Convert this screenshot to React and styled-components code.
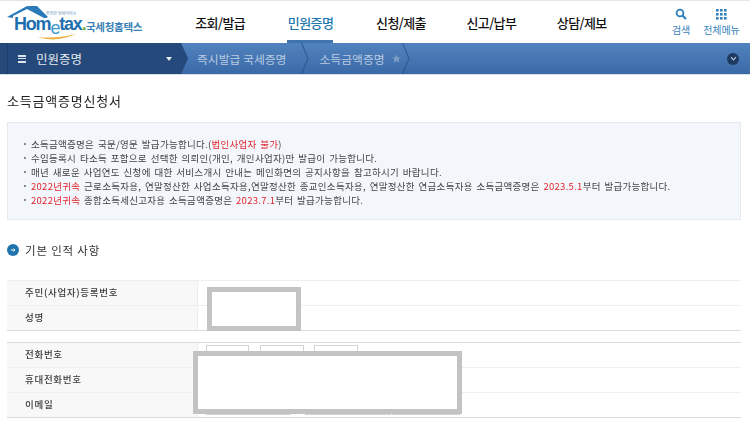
import React from "react";
import styled, { createGlobalStyle, css } from "styled-components";

const Global = createGlobalStyle`
  html, body {
    margin: 0;
    padding: 0;
    background: #fff;
    font-family: "Noto Sans CJK KR", "Noto Sans", sans-serif;
  }
`;

// the reference is a scaled down capture, so its small text is a little soft
const soft = css`
  filter: blur(0.3px);
`;

const Page = styled.div`
  position: relative;
  width: 750px;
  height: 422px;
  overflow: hidden;
  background: #fff;
`;

const Header = styled.header`
  display: flex;
  align-items: flex-start;
  height: 42px;
  border-top: 1px solid #e6e6e6;
`;

const LogoWrap = styled.div`
  position: relative;
  width: 175px;
  height: 42px;
  flex: none;
`;

const LogoArt = styled.svg`
  position: absolute;
  left: 0;
  top: 0;
`;

const LogoWord = styled.span`
  position: absolute;
  left: 14px;
  top: 16px;
  font-family: "Liberation Sans", sans-serif;
  font-size: 18px;
  line-height: 15px;
  font-weight: 700;
  letter-spacing: -1.2px;
  color: #1e6fb0;
`;

const LogoE = styled.span`
  position: relative;
  top: 4px;
  color: #3d9bd0;
  font-weight: 400;
`;

const LogoDot = styled.span`
  color: #7ab52e;
`;

const LogoKor = styled.span`
  position: absolute;
  left: 86px;
  top: 18px;
  font-size: 10.5px;
  line-height: 15px;
  font-weight: 700;
  letter-spacing: -0.3px;
  color: #3a7fb5;
`;

const LogoTiny = styled.span`
  position: absolute;
  left: 46px;
  top: 10px;
  font-size: 4px;
  line-height: 5px;
  color: #5b8fbb;
  white-space: nowrap;
`;

const Nav = styled.nav`
  display: flex;
  width: 452px;
`;

const NavItem = styled.a`
  position: relative;
  width: 90.4px;
  height: 42px;
  padding-top: 11px;
  box-sizing: border-box;
  text-align: center;
  font-size: 13px;
  line-height: 22px;
  font-weight: 500;
  letter-spacing: -0.6px;
  color: ${(p) => (p.$active ? "#2277ae" : "#111")};
  &::after {
    content: "";
    display: ${(p) => (p.$active ? "block" : "none")};
    position: absolute;
    left: 22px;
    right: 23px;
    bottom: 0;
    height: 3px;
    background: #3f74ad;
  }
`;

const Tools = styled.div`
  display: flex;
  margin-left: 45px;
  gap: 13px;
`;

const ToolBtn = styled.a`
  display: flex;
  flex-direction: column;
  align-items: center;
  padding-top: 7px;
  font-size: 10px;
  line-height: 13px;
  letter-spacing: -0.1px;
  color: #3b85bb;
  svg {
    display: block;
    margin-bottom: 3px;
  }
`;

const Bar = styled.div`
  display: flex;
  align-items: center;
  height: 31px;
  background: linear-gradient(#5183be, #3a69a7);
  border-bottom: 1px solid #d9dfe7;
`;

const BarMain = styled.div`
  position: relative;
  display: flex;
  align-items: center;
  flex: none;
  width: 181px;
  height: 100%;
  padding-left: 18px;
  box-sizing: border-box;
  background: #24497a;
  color: #e4e9f0;
  font-size: 12.5px;
  &::before {
    content: "";
    position: absolute;
    left: 7px;
    top: 0;
    bottom: 0;
    width: 1px;
    background: #1c3d69;
  }
  &::after {
    content: "";
    position: absolute;
    left: 100%;
    top: 0;
    bottom: 0;
    width: 7px;
    background: #24497a;
    clip-path: polygon(0 0, 100% 50%, 0 100%);
  }
`;

const Burger = styled.span`
  width: 8px;
  height: 8px;
  margin-right: 10px;
  border-top: 2px solid #dfe6ef;
  border-bottom: 2px solid #dfe6ef;
  background: linear-gradient(#dfe6ef, #dfe6ef) center / 100% 1.4px no-repeat;
  box-sizing: border-box;
`;

const Caret = styled.span`
  margin-left: auto;
  margin-right: 9px;
  width: 0;
  height: 0;
  border-left: 3.5px solid transparent;
  border-right: 3.5px solid transparent;
  border-top: 4px solid #e8edf3;
`;

const Crumb = styled.span`
  font-size: 11.8px;
  color: #b9cbe2;
  margin-left: ${(p) => p.$left};
  white-space: nowrap;
`;

const Sep = styled.svg`
  flex: none;
  margin-left: ${(p) => p.$left};
`;

const Star = styled.svg`
  flex: none;
  margin-left: 7px;
`;

const More = styled.span`
  display: flex;
  align-items: center;
  justify-content: center;
  width: 12px;
  height: 12px;
  margin-left: auto;
  margin-right: 11px;
  border-radius: 50%;
  background: #1f3a60;
`;

const Content = styled.main`
  padding: 0 9px 0 7px;
`;

const Title = styled.h1`
  margin: 16px 0 12px;
  font-size: 13px;
  line-height: 19px;
  font-weight: 400;
  letter-spacing: 0.8px;
  color: #222;
  ${soft}
`;

const Notice = styled.ul`
  height: 98px;
  margin: 0;
  padding: 14px 0 0 16px;
  box-sizing: border-box;
  list-style: none;
  background: #f3f6fb;
  border: 1px solid #e5e9f0;
`;

const NoticeLine = styled.li`
  position: relative;
  padding-left: 7px;
  font-size: 9.5px;
  line-height: 14px;
  letter-spacing: 0.28px;
  word-spacing: 1.4px;
  white-space: nowrap;
  color: #444;
  ${soft}
  &::before {
    content: "";
    position: absolute;
    left: 0;
    top: 6px;
    width: 2px;
    height: 2px;
    background: #8a8a8a;
  }
`;

const Red = styled.span`
  color: #e0262c;
`;

const SectionTitle = styled.h2`
  display: flex;
  align-items: center;
  gap: 6px;
  margin: 21px 0 21px;
  font-size: 11.5px;
  line-height: 18px;
  font-weight: 400;
  letter-spacing: 0.8px;
  color: #333;
  ${soft}
`;

const Table = styled.div`
  margin-bottom: ${(p) => p.$gap || "0"};
  border-top: 1px solid ${(p) => p.$top || "#eee"};
  border-bottom: 1px solid #dcdcdc;
`;

const Row = styled.div`
  display: flex;
  height: 24px;
  & + & {
    border-top: 1px solid #efefef;
  }
`;

const Head = styled.div`
  flex: none;
  width: 191px;
  padding-left: 18px;
  box-sizing: border-box;
  background: #f8f8f8;
  border-right: 1px solid #eee;
`;

const HeadText = styled.span`
  display: block;
  font-size: 9.5px;
  line-height: 23px;
  font-weight: 500;
  letter-spacing: 0.7px;
  color: #3a3a3a;
  ${soft}
`;

const Cell = styled.div`
  display: flex;
  flex: 1;
  gap: ${(p) => p.$gap || "10.5px"};
  padding-left: 8px;
`;

const Field = styled.div`
  width: ${(p) => p.$w}px;
  height: 20px;
  margin-top: 2px;
  margin-left: ${(p) => p.$ml || "0"};
  box-sizing: border-box;
  border: 1px solid #d4d4d4;
  background: #fff;
`;

const Redact = styled.div`
  position: absolute;
  left: ${(p) => p.$x}px;
  top: ${(p) => p.$y}px;
  width: ${(p) => p.$w}px;
  height: ${(p) => p.$h}px;
  box-sizing: border-box;
  border: 5px solid #c3c3c3;
  background: #fff;
`;

export default function App() {
  return (
    <Page>
      <Global />
      <Header>
        <LogoWrap>
          <LogoArt width="76" height="42" viewBox="0 0 76 42">
            <path d="M7 16 L27 5 L48 17 L44 17 L27 8 L13 15 L13 17 Z" fill="#2a7ab8" />
            <path d="M27 5 L37 5 L48 16 L44 16 Z" fill="#2a7ab8" />
            <path d="M37 36 Q56 42 76 33 Q56 38 37 36 Z" fill="#f0b040" />
          </LogoArt>
          <LogoTiny>안전한 납세서비스</LogoTiny>
          <LogoWord>
            Hom<LogoE>e</LogoE>tax<LogoDot>.</LogoDot>
          </LogoWord>
          <LogoKor>국세청홈택스</LogoKor>
        </LogoWrap>
        <Nav>
          <NavItem>조회/발급</NavItem>
          <NavItem $active>민원증명</NavItem>
          <NavItem>신청/제출</NavItem>
          <NavItem>신고/납부</NavItem>
          <NavItem>상담/제보</NavItem>
        </Nav>
        <Tools>
          <ToolBtn>
            <svg width="12" height="12" viewBox="0 0 12 12" fill="none" stroke="#2f80bd">
              <circle cx="5" cy="5" r="3.4" strokeWidth="1.8" />
              <path d="M7.5 7.5 L11 11" strokeWidth="2.2" />
            </svg>
            검색
          </ToolBtn>
          <ToolBtn>
            <svg width="11" height="12" viewBox="0 0 11 12" fill="#2f80bd">
              {[0, 4, 8].map((y) =>
                [0, 4, 8].map((x) => <rect key={`${x}-${y}`} x={x} y={y + 1} width="2.6" height="2.6" />)
              )}
            </svg>
            전체메뉴
          </ToolBtn>
        </Tools>
      </Header>
      <Bar>
        <BarMain>
          <Burger />
          민원증명
          <Caret />
        </BarMain>
        <Crumb $left="16px">즉시발급 국세증명</Crumb>
        <Sep $left="15px" width="8" height="31" viewBox="0 0 8 31" fill="none" stroke="#2c5486">
          <path d="M0.5 0 L7 15.5 L0.5 31" />
        </Sep>
        <Crumb $left="10px">소득금액증명</Crumb>
        <Star width="9" height="9" viewBox="0 0 24 24" fill="#7d9cc4">
          <path d="M12 1 L15.4 8.6 L23.5 9.4 L17.4 14.9 L19.1 23 L12 18.8 L4.9 23 L6.6 14.9 L0.5 9.4 L8.6 8.6 Z" />
        </Star>
        <Sep $left="1px" width="8" height="31" viewBox="0 0 8 31" fill="none" stroke="#2c5486">
          <path d="M0.5 0 L7 15.5 L0.5 31" />
        </Sep>
        <More>
          <svg width="7" height="7" viewBox="0 0 7 7" fill="none" stroke="#b7c6da" strokeWidth="1.2">
            <path d="M1 2.2 L3.5 4.8 L6 2.2" />
          </svg>
        </More>
      </Bar>
      <Content>
        <Title>소득금액증명신청서</Title>
        <Notice>
          <NoticeLine>
            소득금액증명은 국문/영문 발급가능합니다.(<Red>법인사업자 불가</Red>)
          </NoticeLine>
          <NoticeLine>수임등록시 타소득 포함으로 선택한 의뢰인(개인, 개인사업자)만 발급이 가능합니다.</NoticeLine>
          <NoticeLine>매년 새로운 사업연도 신청에 대한 서비스개시 안내는 메인화면의 공지사항을 참고하시기 바랍니다.</NoticeLine>
          <NoticeLine>
            <Red>2022년귀속</Red> 근로소득자용, 연말정산한 사업소득자용,연말정산한 종교인소득자용, 연말정산한 연금소득자용 소득금액증명은 <Red>2023.5.1</Red>부터 발급가능합니다.
          </NoticeLine>
          <NoticeLine>
            <Red>2022년귀속</Red> 종합소득세신고자용 소득금액증명은 <Red>2023.7.1</Red>부터 발급가능합니다.
          </NoticeLine>
        </Notice>
        <SectionTitle>
          <svg width="12" height="12" viewBox="0 0 12 12">
            <circle cx="6" cy="6" r="6" fill="#1f74b0" />
            <path d="M3.8 6 H8 M6.6 4.6 L8 6 L6.6 7.4" stroke="#fff" strokeWidth="1" fill="none" />
          </svg>
          기본 인적 사항
        </SectionTitle>
        <Table $gap="11px">
          <Row>
            <Head><HeadText>주민(사업자)등록번호</HeadText></Head>
            <Cell />
          </Row>
          <Row>
            <Head><HeadText>성명</HeadText></Head>
            <Cell />
          </Row>
        </Table>
        <Table $top="#dcdcdc">
          <Row>
            <Head><HeadText>전화번호</HeadText></Head>
            <Cell>
              <Field $w={43} />
              <Field $w={44} />
              <Field $w={44} />
            </Cell>
          </Row>
          <Row>
            <Head><HeadText>휴대전화번호</HeadText></Head>
            <Cell />
          </Row>
          <Row>
            <Head><HeadText>이메일</HeadText></Head>
            <Cell $gap="14px">
              <Field $w={85} />
              <Field $w={86} />
              <Field $w={68} $ml="-13px" />
            </Cell>
          </Row>
        </Table>
      </Content>
      <Redact $x={207} $y={287} $w={94} $h={44} />
      <Redact $x={193} $y={351} $w={269} $h={63} />
    </Page>
  );
}
